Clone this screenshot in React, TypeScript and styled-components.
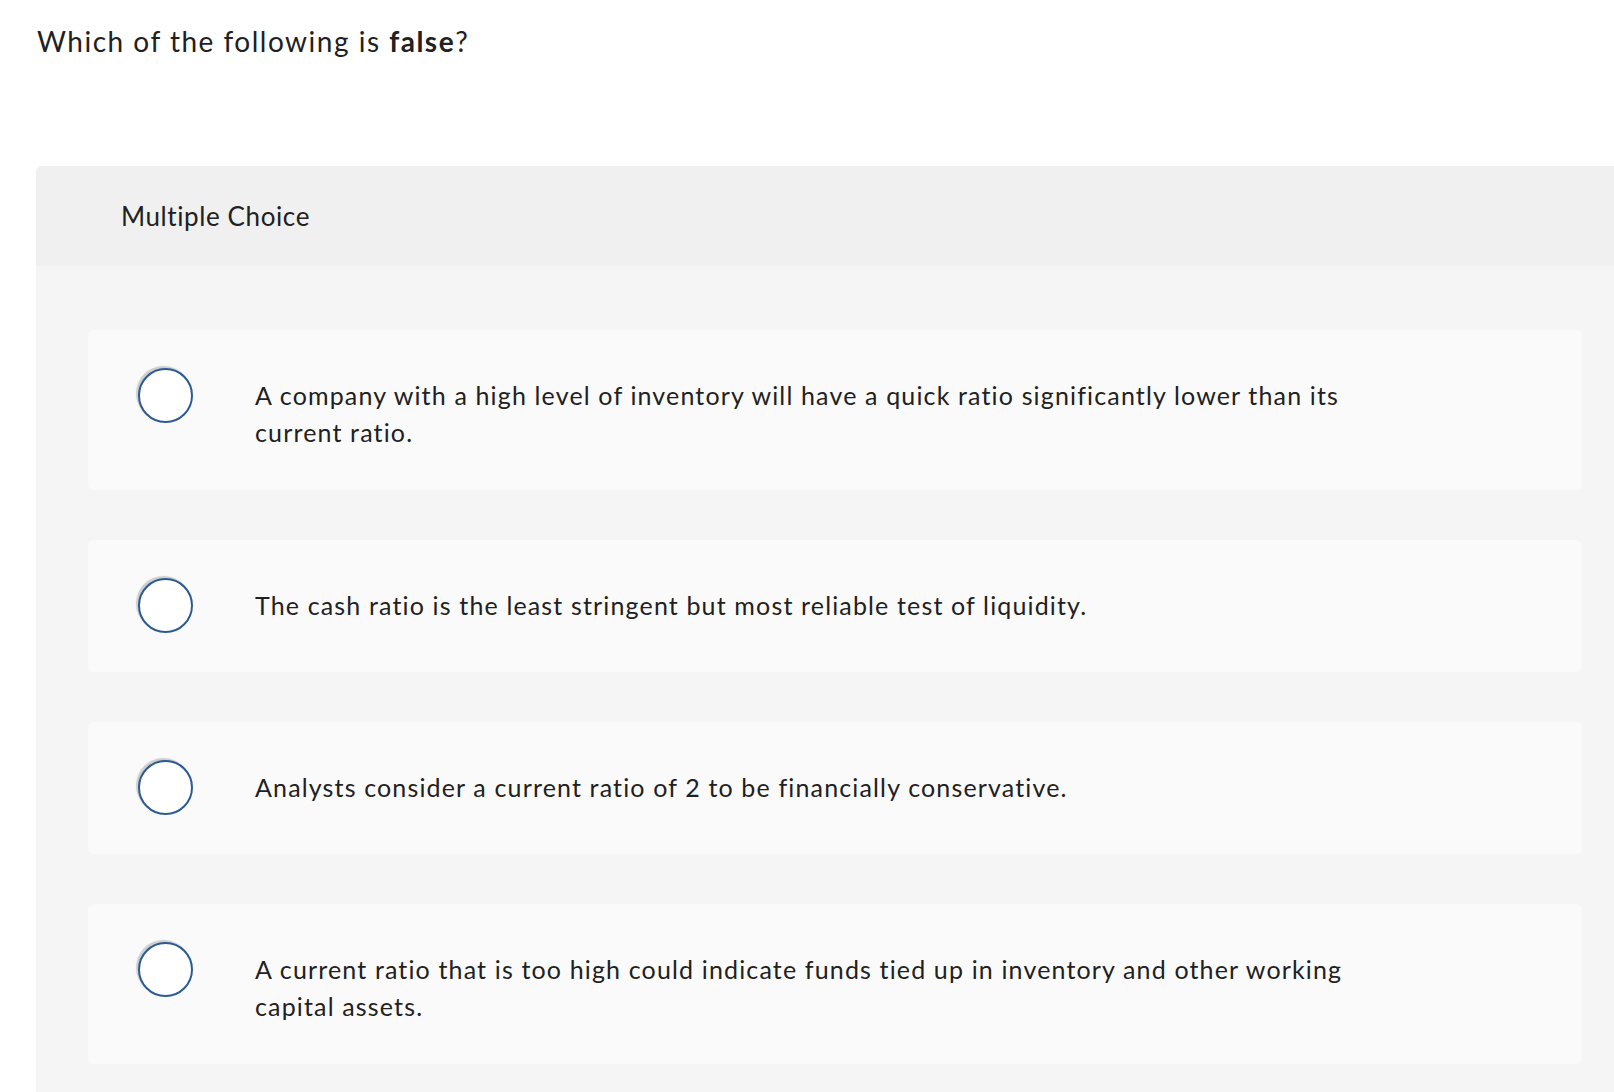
import styled, { createGlobalStyle } from "styled-components";

const GlobalStyle = createGlobalStyle`
  html, body {
    margin: 0;
    padding: 0;
    background: #ffffff;
    overflow-x: hidden;
  }
  body {
    font-family: Lato, "Liberation Sans", sans-serif;
    color: #212121;
  }
`;

const Page = styled.div`
  display: flex;
  flex-direction: column;
`;

const Question = styled.h1`
  margin: 24px 0 0 37px;
  font-size: 28px;
  line-height: 34px;
  font-weight: 400;
  letter-spacing: 1.5px;
  color: #212121;

  strong {
    font-weight: 700;
  }
`;

const Panel = styled.section`
  margin: 108px 0 0 36px;
  background: #f5f5f5;
  border-radius: 6px 0 0 0;
  overflow: hidden;
`;

const PanelHeader = styled.div`
  height: 100px;
  padding-left: 85px;
  background: #f0f0f0;
  font-size: 26px;
  line-height: 100px;
  letter-spacing: 0.6px;
  color: #212121;
`;

const ChoiceList = styled.div`
  display: flex;
  flex-direction: column;
  gap: 50px;
  padding: 64px 32px 50px 52px;
`;

const Choice = styled.label`
  display: flex;
  align-items: flex-start;
  padding: 38px 0 39px;
  background: #fafafa;
  border-radius: 6px;
  cursor: pointer;
`;

const Radio = styled.span`
  flex: none;
  width: 51px;
  height: 51px;
  margin-left: 50px;
  border: 2px solid #2c5a92;
  border-radius: 50%;
  background: #ffffff;
  box-shadow: -2px -2px 1px rgba(0, 0, 0, 0.18);
`;

const ChoiceText = styled.span`
  margin-left: 62px;
  padding-top: 9px;
  max-width: 1120px;
  font-size: 25px;
  line-height: 37px;
  letter-spacing: 1.15px;
  color: #212121;
`;

const choices = [
  "A company with a high level of inventory will have a quick ratio significantly lower than its current ratio.",
  "The cash ratio is the least stringent but most reliable test of liquidity.",
  "Analysts consider a current ratio of 2 to be financially conservative.",
  "A current ratio that is too high could indicate funds tied up in inventory and other working capital assets.",
];

export default function App() {
  return (
    <>
      <GlobalStyle />
      <Page>
        <Question>
          Which of the following is <strong>false</strong>?
        </Question>
        <Panel>
          <PanelHeader>Multiple Choice</PanelHeader>
          <ChoiceList>
            {choices.map((text, i) => (
              <Choice key={i}>
                <Radio />
                <ChoiceText>{text}</ChoiceText>
              </Choice>
            ))}
          </ChoiceList>
        </Panel>
      </Page>
    </>
  );
}
